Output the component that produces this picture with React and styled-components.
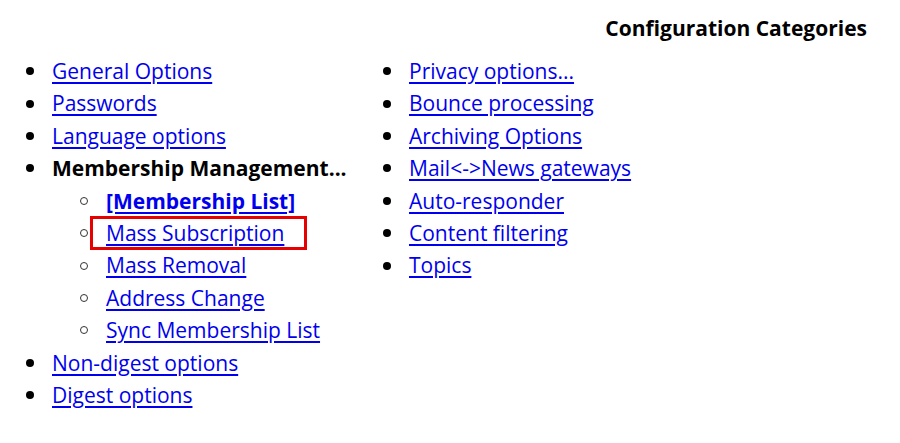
import React from "react";
import styled, { createGlobalStyle } from "styled-components";

const Global = createGlobalStyle`
  html, body { margin: 0; padding: 0; background: #fff; }
  body { font-family: "Open Sans", "Noto Sans", sans-serif; color: #000; }
`;

const Page = styled.div`
  width: 900px;
  height: 443px;
  box-sizing: border-box;
  padding-top: 13px;
`;

const Title = styled.div`
  display: flex;
  justify-content: flex-end;
  padding-right: 33px;
  font-weight: 700;
  font-size: 21px;
  line-height: 30px;
`;

const Columns = styled.div`
  display: grid;
  grid-template-columns: 357px 1fr;
  margin-top: 12px;
`;

const List = styled.ul`
  list-style: none;
  margin: 0;
  padding: 0 0 0 ${(p) => p.$indent || 26}px;
`;

const Item = styled.li`
  font-size: 21px;
  line-height: 32.4px;
`;

const Row = styled.div`
  display: flex;
  align-items: center;
  height: 32.4px;
  gap: 18px;
  &::before {
    content: "";
    flex: none;
    width: 8px;
    height: 8px;
    box-sizing: border-box;
    border-radius: 50%;
    background: ${(p) => (p.$sub ? "transparent" : "#000")};
    border: ${(p) => (p.$sub ? "1.5px solid #333" : "none")};
  }
`;

const Link = styled.a`
  color: #0000ee;
  text-decoration: underline;
  text-underline-offset: 3px;
  font-weight: ${(p) => (p.$bold ? 700 : 400)};
  white-space: nowrap;
`;

const Label = styled.span`
  font-weight: 700;
  white-space: nowrap;
`;

const Marked = styled.span`
  display: inline-flex;
  align-items: center;
  height: 34px;
  box-sizing: border-box;
  border: 3px solid #e60000;
  margin-left: -16px;
  padding: 0 20px 0 13px;
`;

const L = ({ children, bold }) => (
  <Link href="#" $bold={bold} onClick={(e) => e.preventDefault()}>
    {children}
  </Link>
);

export default function App() {
  return (
    <Page>
      <Global />
      <Title>Configuration Categories</Title>
      <Columns>
        <List>
          <Item><Row><L>General Options</L></Row></Item>
          <Item><Row><L>Passwords</L></Row></Item>
          <Item><Row><L>Language options</L></Row></Item>
          <Item>
            <Row><Label>Membership Management...</Label></Row>
            <List $indent={54}>
              <Item><Row $sub><L bold>[Membership List]</L></Row></Item>
              <Item><Row $sub><Marked><L>Mass Subscription</L></Marked></Row></Item>
              <Item><Row $sub><L>Mass Removal</L></Row></Item>
              <Item><Row $sub><L>Address Change</L></Row></Item>
              <Item><Row $sub><L>Sync Membership List</L></Row></Item>
            </List>
          </Item>
          <Item><Row><L>Non-digest options</L></Row></Item>
          <Item><Row><L>Digest options</L></Row></Item>
        </List>
        <List $indent={26}>
          <Item><Row><L>Privacy options...</L></Row></Item>
          <Item><Row><L>Bounce processing</L></Row></Item>
          <Item><Row><L>Archiving Options</L></Row></Item>
          <Item><Row><L>Mail&lt;-&gt;News gateways</L></Row></Item>
          <Item><Row><L>Auto-responder</L></Row></Item>
          <Item><Row><L>Content filtering</L></Row></Item>
          <Item><Row><L>Topics</L></Row></Item>
        </List>
      </Columns>
    </Page>
  );
}
